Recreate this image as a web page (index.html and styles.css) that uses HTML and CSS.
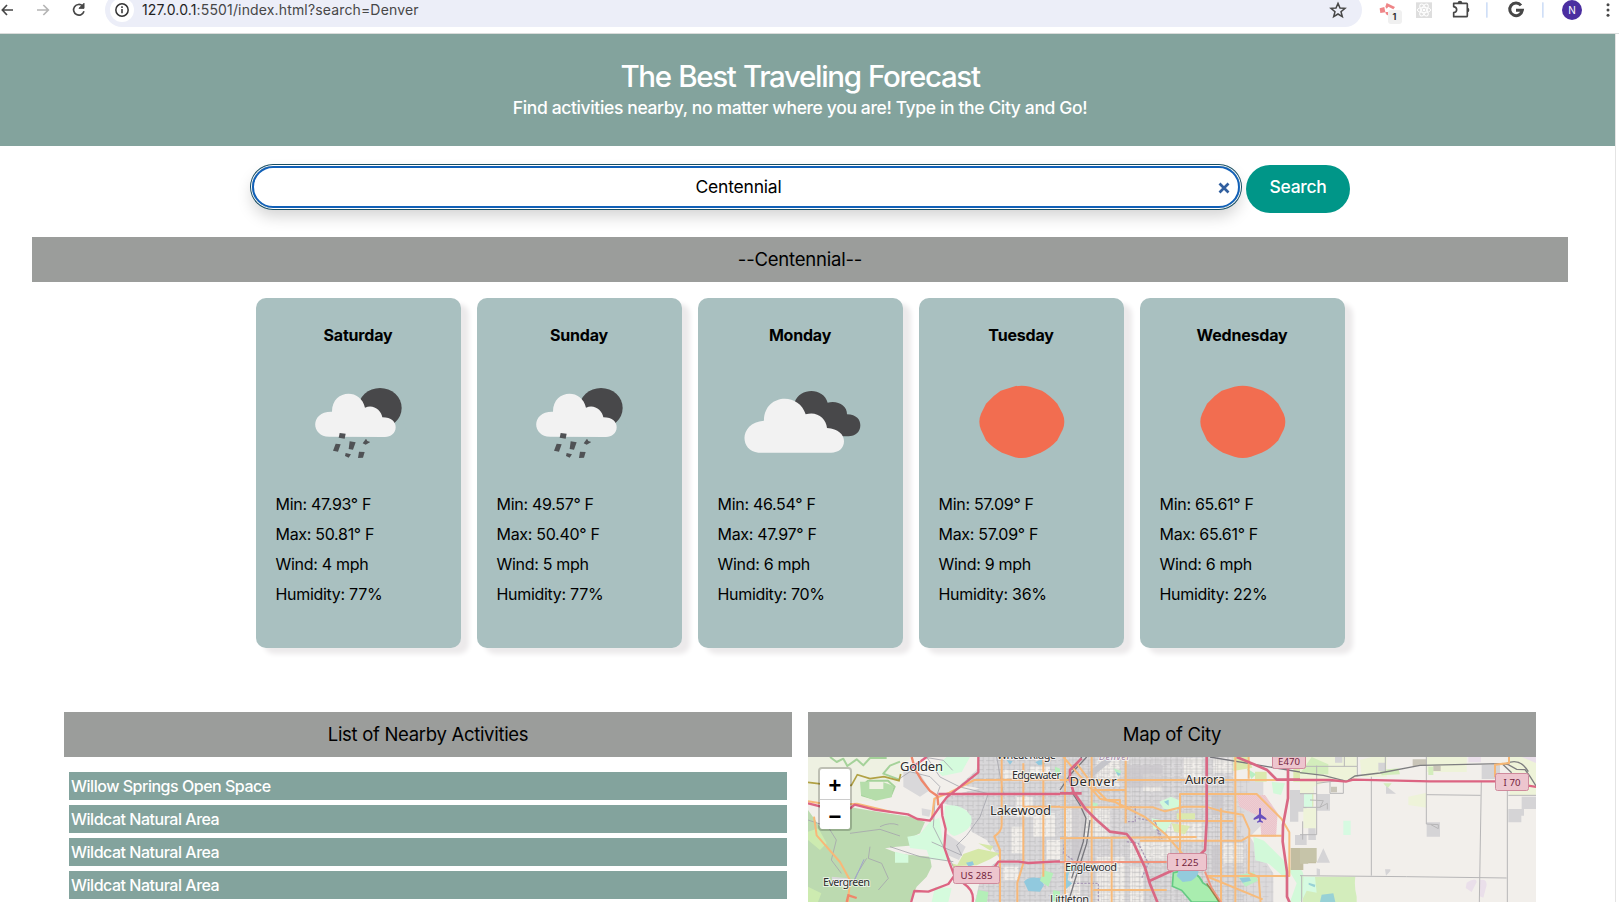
FILE: index.html
```html
<!DOCTYPE html>
<html lang="en">
<head>
<meta charset="utf-8">
<title>The Best Traveling Forecast</title>
<link rel="stylesheet" href="styles.css">
</head>
<body>
<div class="toolbar">
  <svg class="nav-icons" viewBox="0 0 315 99" fill="none" stroke-width="5">
    <g stroke="#474747"><path d="M39 30H8M21 15L7 30l14 15"/><path d="M252 34a16 16 0 1 1-4-16"/><path d="M252 10v15h-15z" fill="#474747" stroke-width="3"/></g>
    <path stroke="#b5b5b5" d="M111 30h33M130 15l15 15-15 15"/>
  </svg>
  <div class="address">
    <svg class="info" viewBox="0 0 72 72" fill="none"><circle cx="36" cy="36" r="36" fill="#fff"/><circle cx="36" cy="36" r="18.5" stroke="#333" stroke-width="4.5"/><path stroke="#333" stroke-width="4.5" d="M36 33v13M36 25v5"/></svg>
    <span class="url"><b>127.0.0.1</b>:5501/index.html?search=Denver</span>
    <svg class="star" viewBox="0 0 54 54" fill="none" stroke="#474747" stroke-width="4.5"><path d="M27 7l6 14 15 1-12 10 4 15-13-8-13 8 4-15L6 22l15-1z"/></svg>
  </div>
  <svg class="ext-icons" viewBox="366 0 771 99">
    <g fill="#ef8587"><path d="M419 25l14-4 3 16-15 2z"/><path d="M436 20l4-11 25 12-5 7-15-8-5 6zM436 36l8 0 3 12-9-5z"/></g>
    <rect x="444" y="30" width="42" height="42" rx="9" fill="#f0f0f0"/>
    <text x="463" y="59" class="badge" text-anchor="middle">1</text>
    <rect x="528" y="7" width="48" height="47" fill="#dedede"/>
    <g fill="none" stroke="#fff" stroke-width="3"><ellipse cx="552" cy="30" rx="20" ry="8"/><ellipse cx="552" cy="30" rx="20" ry="8" transform="rotate(60 552 30)"/><ellipse cx="552" cy="30" rx="20" ry="8" transform="rotate(120 552 30)"/></g><circle cx="552" cy="30" r="4" fill="#fff"/>
    <path fill="none" stroke="#474747" stroke-width="5" stroke-linejoin="round" d="M641 10h39q2 0 2 3v34q0 3-3 3h-38V38q9-2 9-9t-9-9z"/><path fill="#474747" d="M653 9q0-7 7-7t7 7zM682 23q6 0 6 7t-6 7z"/>
    <rect x="738" y="7" width="5" height="46" fill="#d0dff7"/><rect x="906" y="7" width="5" height="46" fill="#d0dff7"/>
    <path fill="none" stroke="#474747" stroke-width="9" d="M843 16a19 19 0 1 0 4 15h-19"/>
    <circle cx="996" cy="30" r="30" fill="#4b2ea0"/>
    <text x="996" y="41" class="avatar" text-anchor="middle">N</text>
    <g fill="#474747"><circle cx="1104" cy="14" r="4.5"/><circle cx="1104" cy="30" r="4.5"/><circle cx="1104" cy="46" r="4.5"/></g>
  </svg>
</div>
<div class="page">
  <header class="hero">
    <h1>The Best Traveling Forecast</h1>
    <p>Find activities nearby, no matter where you are! Type in the City and Go!</p>
  </header>
  <main>
    <form class="search">
      <div class="field"><span>Centennial</span><svg viewBox="0 0 12 12"><path d="M1.5 1.5l9 9M10.5 1.500l-9 9" stroke="#315f9f" stroke-width="2.7"/></svg></div>
      <button type="button">Search</button>
    </form>
    <h2 class="bar city">--Centennial--</h2>
    <section class="cards">
      <article class="card"><h3>Saturday</h3>
        <svg class="weather" viewBox="18 75 615 300"><use href="#rain"/></svg>
        <p>Min: 47.93° F</p><p>Max: 50.81° F</p><p>Wind: 4 mph</p><p>Humidity: 77%</p></article>
      <article class="card"><h3>Sunday</h3>
        <svg class="weather" viewBox="18 75 615 300"><use href="#rain"/></svg>
        <p>Min: 49.57° F</p><p>Max: 50.40° F</p><p>Wind: 5 mph</p><p>Humidity: 77%</p></article>
      <article class="card"><h3>Monday</h3>
        <svg class="weather" viewBox="24 75 615 300">
          <path fill="#48484a" d="M314 156C330 112 400 111 413 158C443 150 472 167 471 193C500 194 511 209 511 226C511 246 496 259 475 259H440L340 210z"/>
          <path fill="#f2f2f2" d="M205 308C147 303 147 217 222 212C222 132 326 124 347 193C380 182 409 205 411 234C445 237 462 253 462 274C462 296 445 308 423 308z"/>
        </svg>
        <p>Min: 46.54° F</p><p>Max: 47.97° F</p><p>Wind: 6 mph</p><p>Humidity: 70%</p></article>
      <article class="card"><h3>Tuesday</h3>
        <svg class="weather" viewBox="687 75 615 300"><use href="#sun"/></svg>
        <p>Min: 57.09° F</p><p>Max: 57.09° F</p><p>Wind: 9 mph</p><p>Humidity: 36%</p></article>
      <article class="card"><h3>Wednesday</h3>
        <svg class="weather" viewBox="687 75 615 300"><use href="#sun"/></svg>
        <p>Min: 65.61° F</p><p>Max: 65.61° F</p><p>Wind: 6 mph</p><p>Humidity: 22%</p></article>
    </section>
    <section class="columns">
      <div class="column">
        <h2 class="bar">List of Nearby Activities</h2>
        <ul class="activities"><li>Willow Springs Open Space</li><li>Wildcat Natural Area</li><li>Wildcat Natural Area</li><li>Wildcat Natural Area</li></ul>
      </div>
      <div class="column">
        <h2 class="bar">Map of City</h2>
        <div class="map">
          <svg class="tiles" viewBox="808 757 728 145">
            <defs>
              <pattern id="grid" width="19" height="15" patternUnits="userSpaceOnUse"><path d="M0 3H19M5 0V15M14 0V15M0 10H9" fill="none" stroke="#bfbbbf" stroke-width=".6"/></pattern>
              <pattern id="grid2" width="31" height="27" patternUnits="userSpaceOnUse"><path d="M0 6H31M8 0V27M23 6V27M0 20H23" fill="none" stroke="#a9a9ad" stroke-width="1.1"/></pattern>
              <pattern id="hatch" width="6" height="6" patternUnits="userSpaceOnUse"><path d="M0 6L6 0" stroke="#e3a9b4" stroke-width=".7"/></pattern>
            </defs>
            <rect x="808" y="757" width="728" height="145" fill="#f2efeb"/>
            <!-- western foothills -->
            <g transform="translate(800 700) scale(.33333)">
              <path fill="#eef1e2" d="M24 171H330L300 240L250 300L100 310L24 300z"/>
              <path fill="#bcdab0" d="M24 330L60 380L152 322L250 338L330 350L375 366L360 400L335 412L345 436L290 440L255 445L300 462L390 470L395 500L380 530L350 560L330 606H24z"/>
              <path fill="#cdebb0" d="M24 395L55 385L80 430L60 450L24 420zM24 560l40 20-10 26H24z"/>
              <g fill="none" stroke="#a5d29a" stroke-width="6" stroke-linejoin="round"><path d="M90 171l20 15 20-10 12 22 28-20 20 18 20-22h50M186 258l18-16 60 0 20 18-12 28-50 8-36-10zM300 185l-30 12-20 24 48 18"/></g>
              <path fill="#b5ddaa" d="M180 245h28v22h42v-20l30 10-5 35-48 10-44-18z"/>
              <path fill="#d5fbdd" d="M390 365l28-12 10 70 22 60-60-5-10-28-50-6-8-34 36-6zM285 455l40 10v23h-40zM440 171h70l-25 45-58 12-25-25zM405 560l50 5-10 41h-50z"/>
              <path fill="#d6e8a8" d="M455 490l40 12-30 15z"/>
              <g fill="#d9d8da"><path d="M535 171H840V606H525L545 520L600 478L585 455L560 420L515 395L500 330L430 310L440 290L540 265L480 255L530 210zM310 210l50 10 30 50-30 20-50-30zM432 395l65 45-20 40-35-15zM365 325l28 5-5 20-22-4zM95 530l50 5-5 25-40-5z"/></g>
              <path fill="#f2efeb" d="M610 210h50v26h-50zM650 290h48v60h-48zM700 340h65v70h-65zM635 380h35v80h-35zM740 420h55v58h-55zM610 500h45v40h-45zM690 200h60v30h-60z"/>
              <path fill="url(#grid2)" d="M535 171H840V606H525L545 520L600 478L585 455L560 420L515 395L500 330L430 310L440 290L540 265L480 255L530 210z"/>
              <path fill="#d5fbdd" d="M435 318q50-10 78 30q12 40-50 60q-25-8-30-55z"/>
              <path fill="#d6e8a8" d="M490 462l45-16 65 14-30 18-40 18-60 2zM535 430l45 8-8 14z"/>
              <g fill="#91c9de"><path d="M672 545q15-18 50-10l10 20-12 20-35-2zM706 186l20-8 10 14-20 4zM620 180l18 4-8 10zM498 488l20-4 4 10-16 6z"/></g>
              <g fill="#b4efb8"><path d="M730 510l30 10-15 40-25-18zM760 570l35 8-5 28h-35zM765 200l25 10v20h-24zM535 570l30 6-4 30h-35z"/></g>
              <g fill="none" stroke="#a6a6ad" stroke-width="2.5"><path d="M380 171l40 60 60 30 85 20-25 70-40 55-30 30 15 30-90-40M300 235l30-20 60 15 30 30-15 40-5 80 40 80 20 40M24 360l60 20 25 40-15 60 30 40M210 440l-5 35 40 15 20 45-30 35M150 400l90-12 60 20M240 380q30-15 55-5M270 440l90 30 100 15M200 475l-28 45-16 34M590 171l20 110M370 171l60 10 28 30"/></g>
              <path fill="none" stroke="#9fa3cf" stroke-width="3" d="M192 478l-18 40-14 30-24 10"/>
              <path fill="none" stroke="#b1a144" stroke-width="5" d="M24 247l50 6 80 3 18-32 38 12 42-6 45 12 5-20"/>
              <g fill="none" stroke="#f8b878" stroke-width="6" stroke-linejoin="round"><path d="M24 304l75 12 72-5 100 24M42 350l8 56 70 80 30 55-6 65M395 360l8-64 45-18 75-38 315-2M605 171V375q0 20-22 34L600 450V606M670 190V490l-18 58V606M730 171V530M790 171l10 65V606M670 320h170M795 415h45"/></g>
              <path fill="none" stroke="#ef876a" stroke-width="7" d="M335 171l10 36 20 34 25 32 22 15 3 28M140 606l5-20 25 8"/>
              <g fill="none" stroke="#dd6482" stroke-width="7" stroke-linejoin="round"><path d="M24 310l80 20 48-6 12-10 60 15 100 14 28 14 38 5 35-50 15-20 95-75Q535 218 535 190V171M415 282H840M425 312q0 15 2 35l10 40-4 55 15 45 15 40-18 25-60 23-42-2-10 35M490 550q34 22 28 56M480 520h90l25-35 60 0 30 4 90-5 65 5M380 171l-48 34M840 171l-32 50 5 40 27 35"/></g>
            </g>
            <!-- Denver and Aurora -->
            <g transform="translate(1060 740) scale(.33333)">
              <path fill="#dcdadc" d="M0 51H520V120H610V250L570 290L640 400V486H0z"/>
              <g fill="#f2efeb"><path d="M10 205h140v85H10zM110 60h70v80h-70zM210 300h120v60H210zM110 350h85v136h-85zM370 55h60v60h-60zM320 245h110v60H320zM210 380h40v106h-40zM490 310h60v60h-60zM460 55h55v45h-55zM250 100h55v55h-55zM10 400h50v80H10z"/></g>
              <path fill="url(#grid)" transform="scale(2)" d="M0 26H260V60H285L270 145L320 200V243H0z"/>
              <path fill="url(#grid2)" d="M0 51H520V250L560 300V486H0z"/>
              <path fill="#c7c5c9" d="M198 75h110v65H198zM35 190h50l-20 150-30 30zM455 165h35v60h-35zM455 315h30v85h-30z" opacity=".65"/>
              <path fill="#edcdd2" d="M530 165h85l38 55-5 70h-44l-4-60-62-30z"/><path fill="url(#hatch)" d="M530 165h85l38 55-5 70h-44l-4-60-62-30z"/>
              <path fill="#d2f9d9" d="M298 185l35-15 28 12-10 30-40-6zM580 290l32 12 40 40 30 30-4 45-52-46-40-10zM635 125l40 5-12 35-23-5zM680 380l30 50-20 56h30l30-45-25-50zM275 235l60 12-20 30-35-10z"/>
              <g fill="#dbe9ae"><path d="M520 51h45l12 32-57 10zM585 95h35v30h-35zM700 70h60v55h-60zM700 150h60v50h-60zM335 250l55 8-15 25-32-8zM350 220h55v18h-55z"/></g>
              <g fill="#b9efc3"><path d="M532 405l50-8 12 25-38 18zM160 85l24 8-8 18zM90 185l25 6-12 18zM15 370l30 10-20 20zM560 85l28 18-14 14z"/></g>
              <path fill="#a9edaf" stroke="#65ca84" stroke-width="5" d="M340 398q70-15 88 30l30 20 18 38H395l-30-35-28-12z"/><path fill="#93cbdc" d="M355 393l60-5q5 20-22 35l-25 3-18-18z"/>
              <g fill="#93cbdc"><path d="M15 400l12-4-4 24 14 10-22 20zM538 414l30-2 5 10-25 6zM168 95l16 7-10 5zM312 185l14-6v18z"/></g>
              <g fill="#d4d3d5"><path d="M690 150h50v65h-25v30h-25zM705 285h35v30h-35zM745 260h35v40h-35z"/></g>
              <path fill="#c2bda1" d="M692 324h76v55h-12v25h-22v-14h-42z"/>
              <g fill="none" stroke="#a99bb7" stroke-width="4" stroke-dasharray="7 4"><path d="M198 200h28v45h-28zM235 235l50 10 20 50-25-5M15 290l-5 50 30 20M200 305l35 5 30 60-20 45M40 430h75v56M285 245l15 55"/></g>
              <g fill="none" stroke="#77777d" stroke-width="4"><path d="M0 150l30-45 50-54M35 155l25 40 18 40-8 70-35 110M90 240l-10 70-35 110-20 66M65 51L38 90M450 51l330 55"/></g>
              <path fill="none" stroke="#c5c5ca" stroke-width="18" d="M150 55l-60 50"/>
              <g fill="none" stroke="#f7bb7b" stroke-width="6" stroke-linejoin="round"><path d="M10 51l35 40 75 85 45 10 90 45 60 50 65 75M95 51V486M197 51V250M155 290V486M15 51V486M0 120H660M0 295l410-4M95 150H197M0 202H280l35 12 55-14h68l40 12 70 12 20 45-2 130 30 12 6 80M280 243h240M360 360V162h230l75 75 23 40V408H440M526 51V486M483 205V486M438 408l170 70M100 450h220M240 302h305l25-15h95M566 51v65M50 70l60 80 30 30h40v20"/></g>
              <path fill="none" stroke="#f2937b" stroke-width="6" d="M0 366h320M435 395l20 50 30 45"/>
              <g fill="none" stroke="#d96884" stroke-width="8" stroke-linejoin="round"><path d="M0 160h65M65 55L30 90V120l10 35 35 50 35 35 40 35 50 7 20 25 35 75 15 50 30 74M270 422l65-30 65-30 35-32 5-85V51M530 51l90 38 30 30H780M684 85v90l-15 80-1 50 13 90v75l9 20"/></g>
              <path fill="none" stroke="#a27b48" stroke-width="4" d="M440 430l20 30 18 26"/>
              <path fill="#6950bd" d="M597 205h6v18l16 12v5l-16-5v6l6 4v3l-9-2-9 2v-3l6-4v-6l-16 5v-5l16-12z"/>
            </g>
            <!-- eastern plains -->
            <g transform="translate(1300 700) scale(.33333)">
              <path fill="#f2efeb" d="M40 171H708V606H10V490H50z"/>
              <g fill="#eef3d9"><path d="M0 171h170v70H90l-50 20v20H0zM180 180l35-9h45v60h-75zM380 171h120v45H380zM630 171h78v115h-78zM325 290l55-12v45l-55-8zM10 325h38v60H10z"/></g>
              <g fill="#d3edbc"><path d="M35 171l50 22v30l-85-2zM8 530h158q-4 30 4 60v16H8zM240 210l55-5 5 18-55 3zM385 200h15v25h-15zM250 250h25l-12 15z"/></g>
              <g fill="#d6fae1"><path d="M10 530h35l5 48-30-6-12 25zM130 362h22v43h-22zM12 282h25v40H12z"/></g>
              <g fill="#d5d4d6"><path d="M50 282h40v50H50zM545 195h55v42h-55zM665 290h43v37h-43zM625 327h47v20h-8v20h-39zM380 367h40v43h-40zM235 188h20v26h-20zM258 258l30 23h-30zM50 488l20-43 20 43zM50 505l10 3v17H50zM255 508h16v5l-13 14zM105 171h22v17h-22z"/></g>
              <path fill="#c6c4a9" d="M0 444h50v43H27l-3 4H0z"/><path fill="#c9c5b8" d="M338 178h42v20h-42zM93 260h18v17H93zM400 197h22v16h-22z"/>
              <path fill="#eadfea" d="M505 171h38v16h-38zM500 548q30-18 30-2l-15 30-18-12zM540 540q20-5 20 15l-10 38-12-5zM665 171h43v18z"/>
              <path fill="#98d1d6" d="M65 584l35-4 6 26H60zM26 548l20 6-2 8-18-8z"/>
              <g fill="none" stroke="#b7b6b7" stroke-width="3"><path d="M0 199h172v-28M172 199v30M133 171v28M256 171v45M214 230V527M0 281h50M50 197v207H0M50 250l80-10v40H90V245M0 527l320 3 300 4M622 270V606M379 171V372l36 2v12l-22-12M379 284l163 2M544 245L538 606M625 286h83M8 364v55M5 527v79M30 300l40 2-10 20 22-12v18M10 322h50"/></g>
              <g fill="none" stroke="#7e7e80" stroke-width="4"><path d="M0 218l70 8 70 18 25-16 75-9 120-23 245-5 20 3 25 14 25 1 15 20 18 29M620 190q40-18 65 25M605 190l30 28"/></g>
              <path fill="none" stroke="#dc6482" stroke-width="7" d="M0 240h90l48 5 22-6 230 5H590M680 256l30 5"/>
              <path fill="none" stroke="#f6b776" stroke-width="6" d="M627 171v18l-42 5v38"/>
            </g>
            <g class="labels">
              <text x="900" y="771" textLength="43" class="l">Golden</text>
              <text x="997" y="759" textLength="59">Wheat Ridge</text>
              <text x="1012" y="778.5" textLength="49">Edgewater</text>
              <text x="1069.5" y="785.5" textLength="47" class="l">Denver</text>
              <text x="1099" y="760" textLength="31" class="sub">Denver</text>
              <text x="1185" y="784" textLength="40" class="l">Aurora</text>
              <text x="990" y="815" textLength="61" class="l">Lakewood</text>
              <text x="1065" y="871" textLength="52">Englewood</text>
              <text x="823" y="885.5" textLength="47">Evergreen</text>
              <text x="1050" y="903" textLength="39">Littleton</text>
            </g>
            <g class="shields"><rect x="953.5" y="866.5" width="46" height="17" rx="2"/><text x="976.5" y="879" textLength="32">US 285</text><rect x="1167.5" y="853.5" width="39" height="17" rx="2"/><text x="1187" y="866" textLength="23">I 225</text><rect x="1272.5" y="750.5" width="33" height="18" rx="2"/><text x="1289" y="765" textLength="22">E470</text><rect x="1495.500" y="773.5" width="33" height="17" rx="2"/><text x="1512" y="786" textLength="17">I 70</text></g>
          </svg>
          <div class="zoom-control"><span>+</span><span>−</span></div>
        </div>
      </div>
    </section>
  </main>
</div>
<svg class="symbols" width="0" height="0">
  <symbol id="rain" overflow="visible">
    <ellipse cx="390" cy="174" rx="65" ry="60" fill="#48484a"/>
    <path fill="#a9c0c0" d="M456 205L438 217L400 240L470 240z"/>
    <path fill="#f2f2f2" d="M240 260C182 262 178 183 246 185C245 119 332 112 345 173C369 161 394 180 397 202C425 202 437 216 437 232C437 250 422 261 405 261z"/>
    <g fill="#505255"><path d="M269 249l18 2-3 15-18-3zM257 281l15 2-8 22-15-3zM299 274l18 3-8 22-13-2zM348 266l4 7 9 3-14 8-9-4zM327 305l17 1-5 17-15 1zM287 309l16 4-7 10-11-5z"/></g>
  </symbol>
  <symbol id="sun" overflow="visible"><path fill="#f26d50" d="M970 110Q995 104 1020 110L1056 122Q1080 136 1102 161L1118 191Q1128 215 1118 239L1102 271Q1080 296 1052 308L1020 320Q995 328 970 320L936 308Q910 296 888 271L873 239Q863 215 873 191L888 161Q910 136 932 122z"/></symbol>
</svg>
</body>
</html>
```
FILE: styles.css
```css
* { box-sizing: border-box; }
body { margin: 0; height: 902px; overflow: hidden; background: #fff; color: #000; font-family: Inter, "Liberation Sans", sans-serif; }
h1, h2, h3, p, ul { margin: 0; padding: 0; font-weight: 400; }
svg { display: block; flex: none; }
.toolbar { height: 34px; display: flex; align-items: flex-start; overflow: hidden; border-bottom: 1px solid #dadcdb; }
.nav-icons { width: 105px; height: 33px; }
.ext-icons { width: 257px; height: 33px; }
.address { flex: 1; height: 34px; margin-top: -7px; border-radius: 17px; background: #eceef8; display: flex; align-items: center; padding: 0 15px 0 5px; }
.info { width: 24px; height: 24px; }
.url { flex: 1; margin-left: 8px; padding-bottom: 2px; font-size: 14px; letter-spacing: .15px; color: #474747; white-space: nowrap; }
.url b { font-weight: 400; color: #1f1f1f; }
.star { width: 18px; height: 18px; }
.badge { font-size: 27px; font-weight: 700; fill: #333; }
.avatar { font-size: 30px; fill: #fff; }
.page { width: 1616px; height: 868px; border-right: 1px solid #e4e4e4; }
.hero { height: 112px; padding: 24px 15px 0 0; background: #83a39d; color: #fff; text-align: center; }
h1 { font-size: 29.5px; line-height: 37px; font-weight: 500; letter-spacing: -1.35px; word-spacing: 1px; }
.hero p { font-size: 17.5px; line-height: 26px; font-weight: 500; letter-spacing: -.37px; }
main { width: 1600px; }
.search { display: flex; align-items: flex-start; padding: 19px 0 0 252px; gap: 6px; height: 91px; }
.field { width: 988px; height: 42px; margin-top: 1px; padding: 0 8px 0 5px; border: 2px solid #1160b7; border-radius: 22px; box-shadow: 0 0 0 1px #fff, 0 0 0 2px #174e63, 0 8px 16px rgba(0,0,0,.18); display: flex; align-items: center; font-size: 17.5px; letter-spacing: -.2px; }
.field span { flex: 1; padding-bottom: 1px; text-align: center; }
.field svg { width: 12px; height: 12px; margin-top: 1px; }
button { width: 104px; height: 48px; border: 0; border-radius: 24px; background: #009688; color: #fff; font: 500 17.5px Inter, sans-serif; letter-spacing: -.3px; padding: 0 0 5px; }
.bar { height: 45px; line-height: 45px; text-align: center; background: #9b9d9b; font-size: 18.5px; letter-spacing: -.3px; }
.city { margin: 0 32px; letter-spacing: -.2px; }
.cards { display: flex; justify-content: center; gap: 16px; margin-top: 16px; }
.card { width: 205px; height: 350px; padding-top: 25px; border-radius: 10px; background: #a9c0c0; box-shadow: 8px 6px 5px #eceaeb; font-size: 16px; letter-spacing: -.3px; }
.card h3 { font-size: 16px; line-height: 24px; font-weight: 700; text-align: center; letter-spacing: -.2px; }
.weather { width: 205px; height: 100px; margin: 28px 0 14px; }
.card p { margin-left: 20px; line-height: 30px; }
.columns { display: grid; grid-template-columns: 1fr 1fr; gap: 16px; margin: 64px 64px 0; }
.activities { list-style: none; margin: 15px 5px 0; display: grid; gap: 5px; }
.activities li { height: 28px; line-height: 28px; padding-left: 2px; background: #83a39d; color: #fff; font-size: 16px; font-weight: 500; letter-spacing: -.48px; }
.map { position: relative; height: 145px; overflow: hidden; }
.tiles { width: 728px; height: 145px; }
.labels { font: 11px "Noto Sans", sans-serif; fill: #2d2d2d; stroke: rgba(255,255,255,.65); stroke-width: 2px; paint-order: stroke; }
.labels .l { font-size: 13px; }
.labels .sub { font-style: italic; fill: #a788a8; font-size: 9px; }
.shields rect { fill: #edc5ce; stroke: #cf8a9c; }
.shields text { font: 9.6px "Noto Sans", sans-serif; fill: #73243c; text-anchor: middle; }
.zoom-control { position: absolute; left: 10px; top: 10px; width: 34px; height: 64px; border: 2px solid rgba(0,0,0,.2); border-radius: 4px; background: #fff; background-clip: padding-box; font: bold 22px/34px "Liberation Sans", sans-serif; text-align: center; }
.zoom-control span { display: block; height: 30px; }
.zoom-control span + span { border-top: 1px solid #ccc; }
.symbols { position: absolute; }
```
